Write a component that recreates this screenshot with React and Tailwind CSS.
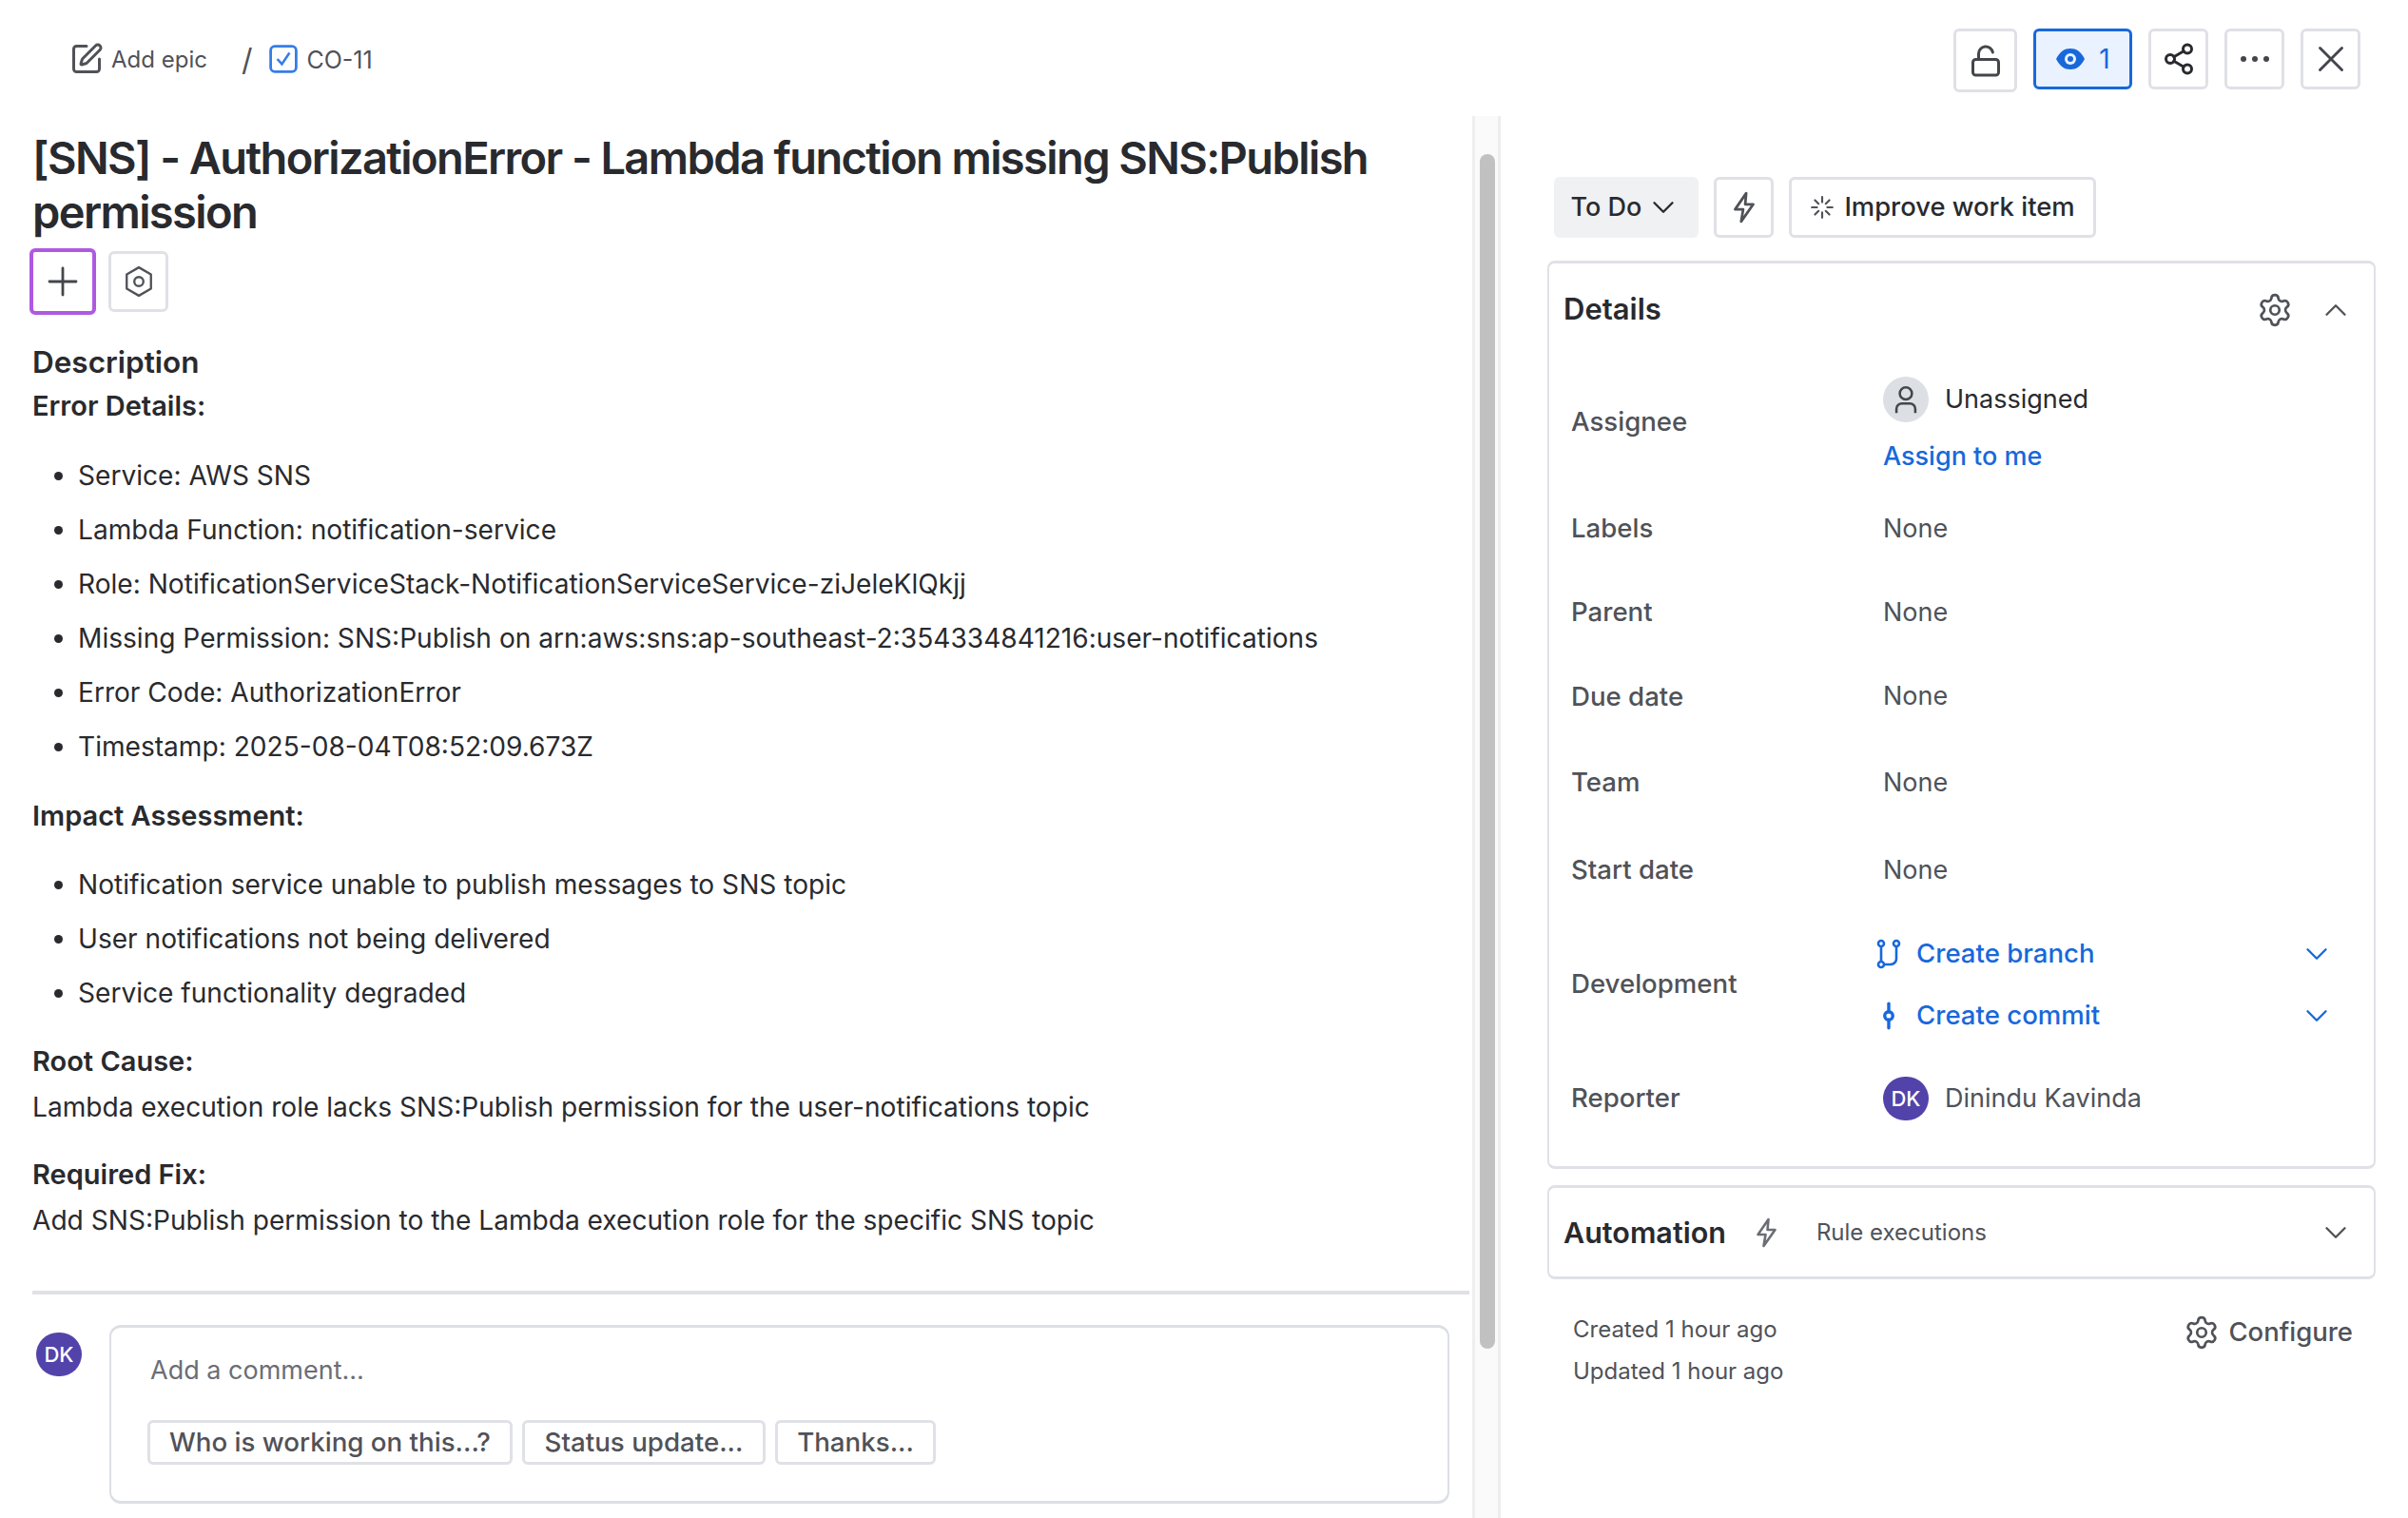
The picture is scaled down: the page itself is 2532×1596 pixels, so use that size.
import { ChevronDown, ChevronUp, GitCommitVertical, LockOpen, Plus, Settings, Share2, SquarePen, X } from "lucide-react";

const errorDetails = [
  "Service: AWS SNS",
  "Lambda Function: notification-service",
  "Role: NotificationServiceStack-NotificationServiceService-ziJeleKlQkjj",
  "Missing Permission: SNS:Publish on arn:aws:sns:ap-southeast-2:354334841216:user-notifications",
  "Error Code: AuthorizationError",
  "Timestamp: 2025-08-04T08:52:09.673Z",
];

const impact = [
  "Notification service unable to publish messages to SNS topic",
  "User notifications not being delivered",
  "Service functionality degraded",
];

function Bolt({ className }) {
  return (
    <svg viewBox="0 0 24 32" fill="none" stroke="currentColor" strokeWidth="2.6" strokeLinejoin="round" className={className}>
      <path d="M14 2 3 18h8l-2 12 12-17h-8z" />
    </svg>
  );
}

function IconBtn({ className = "", children }) {
  return (
    <button className={`flex h-16 w-[63px] items-center justify-center rounded-md border-[3px] border-[#dfe1e6] bg-white text-[#44464c] ${className}`}>
      {children}
    </button>
  );
}

function BulletList({ items, className = "" }) {
  return (
    <ul className={`list-disc pl-[48px] text-[28.1px] ${className}`}>
      {items.map((item) => (
        <li key={item} className="h-[57px] leading-[57px]">{item}</li>
      ))}
    </ul>
  );
}

function Row({ label, height, children }) {
  return (
    <div className="flex items-center" style={{ height }}>
      <div className="ml-[23px] w-[328px] text-[27.6px] font-medium text-[#505258]">{label}</div>
      <div className="flex-1">{children}</div>
    </div>
  );
}

function Avatar({ className = "" }) {
  return (
    <div className={`flex h-[46px] w-[48px] shrink-0 items-center justify-center rounded-full bg-[#5243aa] text-[22px] font-medium text-white ${className}`}>
      DK
    </div>
  );
}

function DevLink({ icon, label }) {
  return (
    <div className="flex h-[65px] items-center text-[27.6px] font-medium text-[#1868db]">
      <div className="flex w-[38px] justify-center">{icon}</div>
      <span className="ml-[10px] flex-1">{label}</span>
      <ChevronDown size={38} strokeWidth={1.5} className="mr-[41px]" />
    </div>
  );
}

export default function App() {
  return (
    <div className="flex h-screen flex-col overflow-hidden bg-white text-[27px] text-[#292a2e] [font-family:Inter,sans-serif]">
      <div className="flex">
        <div className="flex h-[122px] w-[1578px] shrink-0 items-start pl-[73px] pt-[44px] text-[24px] leading-[38px] text-[#505258]">
          <SquarePen size={36} strokeWidth={2} />
          <span className="ml-[8px]">Add epic</span>
          <span className="ml-[36px] text-[32px] leading-[38px]">/</span>
          <svg viewBox="0 0 28 28" className="ml-[18px] mt-[3px] h-[30px] w-[30px]" fill="none">
            <rect x="1.5" y="1.5" width="25" height="25" rx="4" stroke="#357de8" strokeWidth="2.6" />
            <path d="m8 14 4.5 5L20 8" stroke="#357de8" strokeWidth="2.4" />
          </svg>
          <span className="ml-[9px] text-[25px]">CO-11</span>
        </div>
        <div className="flex flex-1 items-start gap-[17px] pl-[476px] pt-[30px]">
          <IconBtn className="h-[67px] w-[67px]"><LockOpen size={36} strokeWidth={2} /></IconBtn>
          <button className="flex h-16 w-[104px] items-center justify-center gap-[14px] rounded-md border-[3px] border-[#1868db] bg-[#e9f2fe] text-[#1868db]">
            <svg viewBox="0 0 32 24" className="h-[24px] w-[32px]" fill="none">
              <path d="M1 12C5 4 10 1 16 1s11 3 15 11c-4 8-9 11-15 11S5 20 1 12z" fill="#1868db" />
              <circle cx="16" cy="12" r="6" fill="#e9f2fe" />
              <circle cx="16" cy="12" r="3" fill="#1868db" />
            </svg>
            <span className="text-[28px]">1</span>
          </button>
          <IconBtn><Share2 size={36} strokeWidth={2} className="text-[#292a2e]" /></IconBtn>
          <IconBtn>
            <svg viewBox="0 0 32 8" className="h-2 w-8" fill="#44464c">
              <circle cx="4" cy="4" r="3" /><circle cx="16" cy="4" r="3" /><circle cx="28" cy="4" r="3" />
            </svg>
          </IconBtn>
          <IconBtn><X size={46} strokeWidth={1.5} /></IconBtn>
        </div>
      </div>

      <div className="flex flex-1 overflow-hidden">
        <div className="w-[1548px] shrink-0 overflow-hidden pl-[34px] pt-[16px] text-[29px]">
          <h1 className="text-[47px] font-semibold leading-[56.5px] tracking-[-1.6px]">
            [SNS] - AuthorizationError - Lambda function missing SNS:Publish permission
          </h1>
          <div className="mt-[10px] flex items-center gap-[13px]">
            <button className="-ml-[3px] flex h-[70px] w-[70px] items-center justify-center rounded-md border-[4px] border-[#af59e1] bg-white text-[#44464c]">
              <Plus size={48} strokeWidth={1.4} />
            </button>
            <IconBtn className="w-16">
              <svg viewBox="0 0 32 32" className="h-[34px] w-[34px]" fill="none" stroke="#505258" strokeWidth="2.2">
                <path d="M16 2 28 9v14l-12 7-12-7V9z" strokeLinejoin="round" />
                <circle cx="16" cy="16" r="4.5" />
              </svg>
            </IconBtn>
          </div>
          <h2 className="mt-[31px] text-[31.5px] font-semibold leading-[38px]">Description</h2>
          <p className="mt-[8px] h-[38px] font-semibold leading-[38px]">Error Details:</p>
          <BulletList items={errorDetails} className="mb-[25px] mt-[26px]" />
          <p className="h-[38px] font-semibold leading-[38px]">Impact Assessment:</p>
          <BulletList items={impact} className="mb-[24px] mt-[25px]" />
          <p className="h-[38px] font-semibold leading-[38px]">Root Cause:</p>
          <p className="mt-[10px] h-[38px] text-[28.1px] leading-[38px]">Lambda execution role lacks SNS:Publish permission for the user-notifications topic</p>
          <p className="mt-[33px] h-[38px] font-semibold leading-[38px]">Required Fix:</p>
          <p className="mt-[10px] h-[38px] text-[28.1px] leading-[38px]">Add SNS:Publish permission to the Lambda execution role for the specific SNS topic</p>
          <div className="mr-[3px] mt-[55px] h-1 bg-[#dfe1e6]" />
          <div className="mt-[32px] flex items-start">
            <Avatar className="ml-[4px] mt-[8px]" />
            <div className="ml-[29px] h-[188px] w-[1409px] rounded-xl border-x-2 border-y-[3px] border-[#dcdfe4] pl-[38px] pt-[26px]">
              <div className="ml-[3px] h-[38px] text-[27px] leading-[38px] text-[#6b6e76]">Add a comment...</div>
              <div className="mt-[33px] flex gap-[10px] text-[27.7px] font-medium text-[#505258]">
                <button className="h-[47px] w-[384px] rounded-md border-[3px] border-[#dfe1e6]">Who is working on this...?</button>
                <button className="h-[47px] w-[256px] rounded-md border-[3px] border-[#dfe1e6]">Status update...</button>
                <button className="h-[47px] w-[169px] rounded-md border-[3px] border-[#dfe1e6]">Thanks...</button>
              </div>
            </div>
          </div>
        </div>

        <div className="w-[30px] shrink-0 border-x-[3px] border-[#eeeeee] bg-[#fafafa] px-[5px] pt-[40px]">
          <div className="h-[1256px] w-[16px] rounded-full bg-[#c1c1c1]" />
        </div>

        <div className="flex-1 pl-[49px] pr-[34px]">
          <div className="ml-[7px] mt-[64px] flex gap-[16px]">
            <button className="flex h-16 w-[152px] items-center justify-center gap-[4px] rounded-md bg-[#f0f1f2] font-medium">
              To Do <ChevronDown size={38} strokeWidth={1.5} />
            </button>
            <IconBtn className="w-16 text-[#505258]"><Bolt className="h-[34px] w-[26px]" /></IconBtn>
            <button className="flex h-16 w-[323px] items-center justify-center gap-[10px] rounded-md border-[3px] border-[#dfe1e6] bg-white text-[27.4px] font-medium">
              <svg viewBox="0 0 24 24" className="h-[26px] w-[26px]" stroke="#505258" strokeWidth="2" strokeLinecap="round">
                <path d="M12 2v5M12 17v5M2 12h5M17 12h5M5 5l3.5 3.5M15.5 15.5 19 19M5 19l3.5-3.5M15.5 8.5 19 5" />
              </svg>
              Improve work item
            </button>
          </div>

          <div className="mt-[24px] h-[955px] rounded-lg border-x-2 border-y-[3px] border-[#dfe1e6]">
            <div className="flex h-[99px] items-center pb-[2px] pl-[15px] pr-[21px]">
              <h3 className="flex-1 text-[31px] font-semibold">Details</h3>
              <Settings size={38} strokeWidth={1.7} className="text-[#505258]" />
              <ChevronUp size={38} strokeWidth={1.5} className="ml-[26px] text-[#505258]" />
            </div>
            <Row label="Assignee" height="136px">
              <div className="pt-[8px]">
                <div className="flex items-center">
                  <div className="flex h-[48px] w-[48px] items-center justify-center rounded-full bg-[#dcdfe4] text-[#44464c]">
                    <svg viewBox="0 0 24 24" className="h-[34px] w-[34px]" fill="none" stroke="currentColor" strokeWidth="1.8">
                      <circle cx="12" cy="7.5" r="4.5" />
                      <path d="M5 22v-3a4 4 0 0 1 4-4h6a4 4 0 0 1 4 4v3" />
                    </svg>
                  </div>
                  <span className="ml-[17px]">Unassigned</span>
                </div>
                <div className="mt-[16px] font-medium text-[#1868db]">Assign to me</div>
              </div>
            </Row>
            <Row label="Labels" height="88px"><span className="text-[#505258]">None</span></Row>
            <Row label="Parent" height="88px"><span className="text-[#505258]">None</span></Row>
            <Row label="Due date" height="89px"><span className="text-[#505258]">None</span></Row>
            <Row label="Team" height="92px"><span className="text-[#505258]">None</span></Row>
            <Row label="Start date" height="92px"><span className="text-[#505258]">None</span></Row>
            <Row label="Development" height="148px">
              <div className="-ml-[13px]">
                <DevLink
                  label="Create branch"
                  icon={
                    <svg viewBox="0 0 26 32" className="h-[32px] w-[26px]" fill="none" stroke="currentColor" strokeWidth="2.6">
                      <circle cx="5" cy="5" r="3" /><circle cx="21" cy="5" r="3" /><circle cx="5" cy="27" r="3" />
                      <path d="M5 8v16M21 8v13a6 6 0 0 1-6 6H8" />
                    </svg>
                  }
                />
                <DevLink label="Create commit" icon={<GitCommitVertical size={34} strokeWidth={2.4} />} />
              </div>
            </Row>
            <Row label="Reporter" height="92px">
              <div className="flex items-center">
                <Avatar />
                <span className="ml-[17px] text-[#505258]">Dinindu Kavinda</span>
              </div>
            </Row>
          </div>

          <div className="mt-[17px] flex h-[99px] items-center rounded-lg border-x-2 border-y-[3px] border-[#dfe1e6] pl-[15px] pr-[21px]">
            <h3 className="text-[30.5px] font-semibold">Automation</h3>
            <Bolt className="ml-[30px] h-[32px] w-[25px] text-[#6b6e76]" />
            <span className="ml-[40px] flex-1 text-[24px] text-[#505258]">Rule executions</span>
            <ChevronDown size={38} strokeWidth={1.5} className="text-[#505258]" />
          </div>

          <div className="mt-[31px] flex justify-between pl-[27px] pr-[24px]">
            <div className="text-[24px] leading-[44px] text-[#505258]">
              <div>Created 1 hour ago</div>
              <div>Updated 1 hour ago</div>
            </div>
            <div className="mt-[3px] flex h-[44px] items-center gap-[9px] text-[27.5px] font-medium text-[#505258]">
              <Settings size={38} strokeWidth={1.7} /> Configure
            </div>
          </div>
        </div>
      </div>
    </div>
  );
}
